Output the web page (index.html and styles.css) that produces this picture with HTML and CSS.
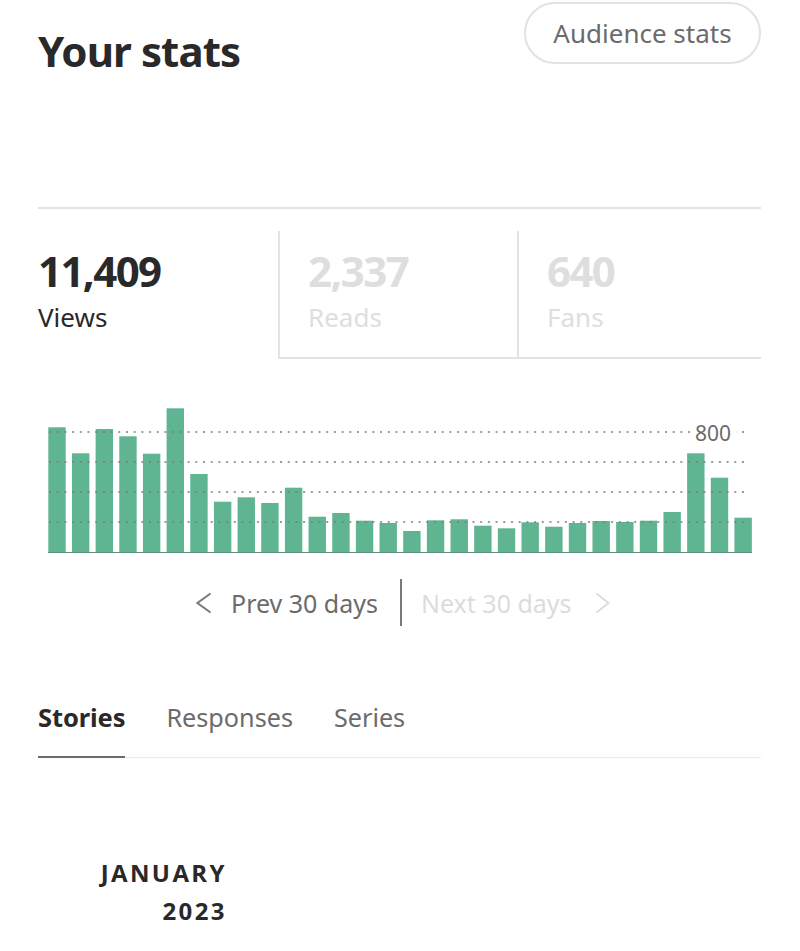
FILE: index.html
```html
<!DOCTYPE html>
<html lang="en">
<head>
<meta charset="utf-8">
<title>Your stats</title>
<link rel="stylesheet" href="styles.css">
</head>
<body>
<main class="page">
  <header class="top">
    <h1 class="title">Your stats</h1>
    <button class="pill">Audience stats</button>
  </header>

  <section class="stats">
    <div class="stat active">
      <div class="num">11,409</div>
      <div class="label">Views</div>
    </div>
    <div class="stat">
      <div class="num">2,337</div>
      <div class="label">Reads</div>
    </div>
    <div class="stat">
      <div class="num">640</div>
      <div class="label">Fans</div>
    </div>
  </section>

  <svg class="chart" width="723" height="160" viewBox="0 0 723 160">
    <line class="axis" x1="10" y1="154.5" x2="714" y2="154.5"/>
    <g class="bars" fill="#5fb592">
      <rect x="10.3" y="29.3" width="17.4" height="124.7"/>
      <rect x="33.96" y="55.3" width="17.4" height="98.7"/>
      <rect x="57.62" y="31" width="17.4" height="123"/>
      <rect x="81.28" y="38.3" width="17.4" height="115.7"/>
      <rect x="104.94" y="55.7" width="17.4" height="98.3"/>
      <rect x="128.6" y="10.3" width="17.4" height="143.7"/>
      <rect x="152.26" y="76" width="17.4" height="78"/>
      <rect x="175.92" y="103.7" width="17.4" height="50.3"/>
      <rect x="199.58" y="99.3" width="17.4" height="54.7"/>
      <rect x="223.24" y="105" width="17.4" height="49"/>
      <rect x="246.9" y="89.7" width="17.4" height="64.3"/>
      <rect x="270.56" y="118.7" width="17.4" height="35.3"/>
      <rect x="294.22" y="115" width="17.4" height="39"/>
      <rect x="317.88" y="122.7" width="17.4" height="31.3"/>
      <rect x="341.54" y="125" width="17.4" height="29"/>
      <rect x="365.2" y="133" width="17.4" height="21"/>
      <rect x="388.86" y="122.3" width="17.4" height="31.7"/>
      <rect x="412.52" y="121.3" width="17.4" height="32.7"/>
      <rect x="436.18" y="127.7" width="17.4" height="26.3"/>
      <rect x="459.84" y="130.3" width="17.4" height="23.7"/>
      <rect x="483.5" y="124.3" width="17.4" height="29.7"/>
      <rect x="507.16" y="128.7" width="17.4" height="25.3"/>
      <rect x="530.82" y="125" width="17.4" height="29"/>
      <rect x="554.48" y="123" width="17.4" height="31"/>
      <rect x="578.14" y="124" width="17.4" height="30"/>
      <rect x="601.8" y="122.7" width="17.4" height="31.3"/>
      <rect x="625.46" y="114" width="17.4" height="40"/>
      <rect x="649.12" y="55.3" width="17.4" height="98.7"/>
      <rect x="672.78" y="79.7" width="17.4" height="74.3"/>
      <rect x="696.44" y="119.7" width="17.4" height="34.3"/>
    </g>
    <g class="grid">
      <line x1="11" y1="34" x2="710" y2="34"/>
      <line x1="11" y1="64" x2="710" y2="64"/>
      <line x1="11" y1="94" x2="710" y2="94"/>
      <line x1="11" y1="124" x2="710" y2="124"/>
    </g>
    <rect class="tagbg" x="653" y="22" width="45" height="24"/>
    <text class="tag" x="675" y="43" text-anchor="middle">800</text>
  </svg>

  <nav class="pager">
    <div class="side left">
      <svg class="chev" width="16" height="22" viewBox="0 0 16 22"><polyline points="14.5,1.5 1.5,11 14.5,20.5"/></svg>
      <span class="plabel">Prev 30 days</span>
    </div>
    <span class="sep"></span>
    <div class="side right">
      <span class="plabel off">Next 30 days</span>
      <svg class="chev off" width="16" height="22" viewBox="0 0 16 22"><polyline points="1.5,1.5 13.5,11 1.5,20.5"/></svg>
    </div>
  </nav>

  <div class="tabs">
    <span class="tab current">Stories</span>
    <span class="tab">Responses</span>
    <span class="tab">Series</span>
  </div>

  <div class="month">
    <div>JANUARY</div>
    <div>2023</div>
  </div>
</main>
</body>
</html>
```

FILE: styles.css
```css
html, body {
  margin: 0;
  padding: 0;
  background: #ffffff;
}

body {
  font-family: "Noto Sans", "Open Sans", sans-serif;
  color: #292929;
}

.page {
  width: 723px;
  margin-left: 38px;
}

.top {
  display: flex;
  justify-content: space-between;
  align-items: flex-start;
  height: 207px;
  border-bottom: 2px solid #e3e3e3;
}

.title {
  margin: 29px 0 0 0;
  font-size: 42px;
  line-height: 44px;
  font-weight: 700;
  letter-spacing: -0.9px;
  color: #292929;
}

.pill {
  margin-top: 2px;
  height: 62px;
  width: 237px;
  padding: 0;
  border: 2px solid #e2e2e2;
  border-radius: 31px;
  background: #ffffff;
  font-family: "Noto Sans", "Open Sans", sans-serif;
  font-size: 26px;
  color: #6b6b6b;
}

.stats {
  display: grid;
  grid-template-columns: 240px 239px 244px;
  margin-top: 22px;
}

.stat {
  height: 126px;
  padding-left: 28px;
  border-left: 2px solid #e3e3e3;
  border-bottom: 2px solid #e3e3e3;
  color: #dedede;
}

.stat.active {
  padding-left: 0;
  border: none;
  height: 128px;
  color: #292929;
}

.num {
  padding-top: 18px;
  font-size: 42px;
  line-height: 44px;
  font-weight: 700;
  letter-spacing: -1.6px;
}

.label {
  margin-top: 11px;
  font-size: 26px;
  line-height: 26px;
}

.chart {
  display: block;
  margin-top: 39px;
}

.axis {
  stroke: #5e8f7c;
  stroke-width: 1;
}

.grid line {
  stroke: #7c7c7c;
  stroke-width: 2;
  stroke-dasharray: 2 5.7;
  opacity: 0.75;
}

.tagbg {
  fill: #ffffff;
}

.tag {
  font-family: "Noto Sans", "Open Sans", sans-serif;
  font-size: 21px;
  fill: #6b6b6b;
}

.pager {
  display: flex;
  align-items: center;
  margin-top: 21px;
  height: 47px;
}

.side {
  flex: 1;
  display: flex;
  align-items: center;
}

.side.left {
  justify-content: flex-end;
  gap: 19px;
  padding-right: 22px;
}

.side.right {
  justify-content: flex-start;
  gap: 23px;
  padding-left: 19px;
}

.sep {
  width: 2px;
  height: 47px;
  background: #7a7a7a;
}

.plabel {
  font-size: 25px;
  line-height: 30px;
  color: #6b6b6b;
}

.plabel.off {
  color: #dcdcdc;
}

.chev polyline {
  fill: none;
  stroke: #7a7a7a;
  stroke-width: 2;
}

.chev.off polyline {
  stroke: #dcdcdc;
}

.tabs {
  display: flex;
  gap: 41px;
  margin-top: 77px;
  border-bottom: 1px solid #ebebeb;
}

.tab {
  padding-bottom: 25px;
  font-size: 25.2px;
  line-height: 28px;
  color: #6b6b6b;
}

.tab.current {
  font-size: 25.5px;
  font-weight: 700;
  letter-spacing: -0.1px;
  color: #292929;
  border-bottom: 2px solid #6b6b6b;
  margin-bottom: -1px;
}

.month {
  width: 189px;
  margin-top: 96px;
  text-align: right;
  font-family: "Open Sans", "Noto Sans", sans-serif;
  font-size: 24px;
  line-height: 38px;
  font-weight: 700;
  letter-spacing: 2.4px;
  color: #292929;
}
```
